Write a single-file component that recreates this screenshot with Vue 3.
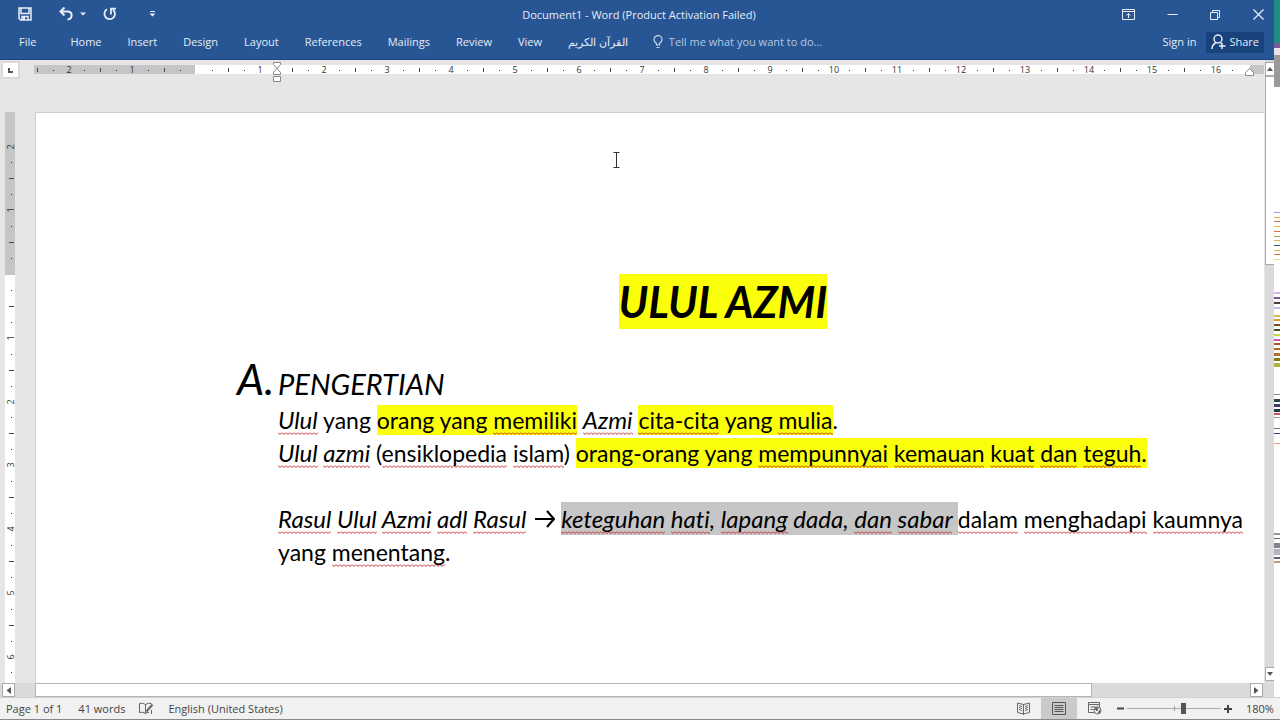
<script setup>
const tabs = ['Home', 'Insert', 'Design', 'Layout', 'References', 'Mailings', 'Review', 'View']

const UNIT = 63.75
function marks(from, to) {
  const list = []
  for (let q = from; q <= to; q++) {
    if (q === 0) continue
    const kind = q % 4 === 0 ? 'num' : q % 2 === 0 ? 'tick' : 'dot'
    list.push({ q, kind, pos: Math.round((q * UNIT) / 4), label: Math.abs(q / 4) })
  }
  return list
}
const across = marks(-10, 65)
const down = marks(-8, 25)

const noise = [
  [0, 43, '#1f8f86'], [43, 5, '#7d5a9a'], [48, 7, '#e8e4e8'], [55, 32, '#9a9a9a'],
  [212, 1, '#c08be0'], [217, 1, '#e5a94a'], [221, 1, '#c77a3a'], [226, 1, '#e8b84a'], [231, 1, '#c77a3a'],
  [236, 1, '#b09a4a'], [240, 1, '#d8b84a'], [245, 1, '#445566'], [250, 1, '#e8b84a'], [254, 1, '#c77a3a'], [259, 1, '#f1e36a'],
  [292, 2, '#d8b8e8'], [297, 2, '#7a5a8a'], [302, 2, '#553a4a'], [307, 2, '#c8b8ee'],
  [315, 2, '#d8b84a'], [319, 2, '#e0982a'], [324, 2, '#7a4a2a'], [329, 2, '#4a4a1a'], [334, 2, '#c9d84a'],
  [339, 2, '#cc55aa'], [343, 2, '#a8552a'], [348, 2, '#b0682a'], [353, 3, '#a8752a'], [358, 3, '#8a7a1a'], [363, 4, '#a8b83a'],
  [394, 1, '#888888'], [399, 3, '#2a4a4a'], [404, 3, '#443a6a'], [409, 3, '#223a3a'], [413, 2, '#cc5566'], [417, 1, '#999999'],
  [428, 1, '#777777'], [433, 1, '#334477'], [443, 1, '#ee9988'],
  [533, 2, '#999999'], [538, 1, '#666666'], [543, 5, '#88808c'], [549, 6, '#b8b0c0'], [557, 2, '#6a5a7a'], [561, 2, '#c09a7a']
]
</script>

<template>
  <div class="screen">
    <div class="window">
      <header class="chrome">
        <div class="titlebar">
          <div class="quick">
            <button class="tool save" aria-label="Save">
              <svg width="14" height="14" viewBox="0 0 14 14" fill="none" stroke="#e8eef7" stroke-width="1.5"><path d="M1 1h12v12H2.500L1 11.500zM3 1v5.500h8V1M4 13V9.500h6V13" /><path d="M5 10h2v3H5z" fill="#e8eef7" stroke="none" /></svg>
            </button>
            <button class="tool undo" aria-label="Undo">
              <svg width="14" height="14" viewBox="0 0 14 14" fill="none" stroke="#e8eef7" stroke-width="2"><path d="M5.500 0.500L1.500 4.500l4 4M2 4.500h6.500c5.500 0 5.500 7.500 0 8" /></svg>
            </button>
            <button class="tool caret" aria-label="Undo history">
              <svg width="6" height="4" viewBox="0 0 6 4"><path d="M0 0.500h6L3 3.500z" fill="#e8eef7" /></svg>
            </button>
            <button class="tool redo" aria-label="Repeat">
              <svg width="14" height="14" viewBox="0 0 14 14" fill="none" stroke="#e8eef7" stroke-width="1.800"><path d="M4 2.300A5.300 5.300 0 1 0 10 2.700M8 7.500V1.700h5" /></svg>
            </button>
            <button class="tool more" aria-label="Customize toolbar">
              <svg width="7" height="6" viewBox="0 0 7 6"><path d="M1 0h5v1H1zM0.500 2.500h6L3.500 5.500z" fill="#e8eef7" /></svg>
            </button>
          </div>
          <div class="title">Document1 - Word (Product Activation Failed)</div>
          <div class="controls">
            <button class="tool" aria-label="Ribbon display options">
              <svg width="13" height="11" viewBox="0 0 13 11" fill="none" stroke="#e8eef7"><path d="M0.500 0.500h12v10H0.500zM0.500 2.500h12M6.500 9V4.500M4.500 6.500l2-2 2 2" /></svg>
            </button>
            <button class="tool" aria-label="Minimize">
              <svg width="11" height="11" viewBox="0 0 11 11" fill="none" stroke="#e8eef7"><path d="M0.500 5.500h10" /></svg>
            </button>
            <button class="tool" aria-label="Restore">
              <svg width="11" height="11" viewBox="0 0 11 11" fill="none" stroke="#e8eef7"><path d="M0.500 3.500h7v7h-7zM2.500 3.500v-2h7v7h-2" /></svg>
            </button>
            <button class="tool" aria-label="Close">
              <svg width="11" height="11" viewBox="0 0 11 11" fill="none" stroke="#e8eef7" stroke-width="1.200"><path d="M0.500 0.500l10 10M10.500 0.500l-10 10" /></svg>
            </button>
          </div>
        </div>
        <nav class="tabs">
          <button class="file">File</button>
          <button v-for="t in tabs" :key="t">{{ t }}</button>
          <button lang="ar" dir="rtl">القرآن الكريم</button>
          <button class="tell">
            <svg width="10" height="14" viewBox="0 0 10 14" fill="none" stroke="#c9d8ee" stroke-width="1.200"><path d="M3.500 10V8.500C2.500 7.500 1 6.500 1 4.500a4 3.900 0 0 1 8 0c0 2-1.500 3-2.500 4V10zM3.500 12.500h3" /></svg>
            Tell me what you want to do...
          </button>
          <button class="signin">Sign in</button>
          <button class="share">
            <svg width="15" height="16" viewBox="0 0 15 16" fill="none" stroke="#e8eef7" stroke-width="1.500"><circle cx="7" cy="5" r="4" /><path d="M1 15c0-3.500 1.500-5 4-6.500M9 8.500l1.500 1M11 9v6M8 12h6.500" /></svg>
            Share
          </button>
        </nav>
      </header>

      <div class="body">
        <div class="canvas">
          <div class="top-ruler">
            <button class="tab-stop" aria-label="Tab stop"><svg width="5" height="5" viewBox="0 0 5 5"><path d="M1 0v4h4" fill="none" stroke="#555" stroke-width="2" /></svg></button>
            <svg class="ruler-h" height="24">
              <rect x="0" y="5" width="100%" height="9" fill="#fff" />
              <rect x="0" y="5" width="161" height="9" fill="#c5c5c5" />
              <svg x="100%" y="0" overflow="visible"><rect x="-14" y="5" width="14" height="9" fill="#c5c5c5" /></svg>
              <g v-for="m in across" :key="m.q">
                <text v-if="m.kind === 'num'" :x="162 + m.pos" y="13" class="num">{{ m.label }}</text>
                <rect v-else-if="m.kind === 'tick'" :x="162 + m.pos" y="8" width="1" height="4" fill="#444" />
                <rect v-else :x="162 + m.pos" y="10" width="1" height="1" fill="#333" />
              </g>
              <g fill="#fff" stroke="#888"><path d="M239.500 2.500h7v2l-3.500 4-3.500-4zM239.500 14.500v-2l3.500-4 3.500 4v2zM239.500 16.500h7v5h-7z" /></g>
              <svg x="100%" y="0" overflow="visible"><path d="M-18.500 15.500v-3l4-4 4 4v3z" fill="#fff" stroke="#888" /></svg>
            </svg>
          </div>

          <div class="sheet-row">
            <svg class="ruler-v" width="10">
              <rect width="10" height="100%" fill="#fff" />
              <rect width="10" height="163" fill="#c5c5c5" />
              <g v-for="m in down" :key="m.q">
                <text v-if="m.kind === 'num'" class="num" :transform="`translate(9 ${162 + m.pos}) rotate(-90)`">{{ m.label }}</text>
                <rect v-else-if="m.kind === 'tick'" x="4" :y="162 + m.pos" width="5" height="1" fill="#444" />
                <rect v-else x="6" :y="162 + m.pos" width="1" height="1" fill="#333" />
              </g>
            </svg>
            <main class="page">
              <svg class="ibeam" width="7" height="16" viewBox="0 0 7 16"><path d="M0.500 0.500h6M0.500 15.500h6M3.500 1v14" stroke="#333" fill="none" /></svg>
              <h1><mark>ULUL AZMI</mark></h1>
              <h2><span class="letter">A.</span><span>PENGERTIAN</span></h2>
              <p><i><u>Ulul</u></i> yang <mark>orang yang <u>memiliki</u></mark> <i><u>Azmi</u></i> <mark><u>cita-cita</u> yang <u>mulia</u></mark>.</p>
              <p><i><u>Ulul</u> <u>azmi</u></i> (<u>ensiklopedia</u> <u>islam</u>) <mark>orang-orang yang <u>mempunnyai</u> <u>kemauan</u> <u>kuat</u> <u>dan</u> <u>teguh</u>.</mark></p>
              <p class="gap"><i><u>Rasul</u> <u>Ulul</u> <u>Azmi</u> <u>adl</u> <u>Rasul</u></i> <svg class="arrow" width="20" height="18" viewBox="0 0 20 18" fill="none" stroke="#000" stroke-width="2.200" role="img" aria-label="arrow"><path d="M0 9h19M12 1l7 8-7 8" /></svg> <i class="selected"><u>keteguhan</u> <u>hati</u>, <u>lapang</u> dada, <u>dan</u> <u>sabar</u>&nbsp;</i><u>dalam</u> <u>menghadapi</u> <u>kaumnya</u><br>yang <u>menentang</u>.</p>
            </main>
          </div>

          <div class="hscroll">
            <button class="arrow-btn" aria-label="Scroll left"><svg width="5" height="7" viewBox="0 0 5 7"><path d="M5 0v7L0.500 3.500z" fill="#555" /></svg></button>
            <div class="htrack"><div class="hthumb"></div></div>
            <button class="arrow-btn" aria-label="Scroll right"><svg width="5" height="7" viewBox="0 0 5 7"><path d="M0 0v7l4.500-3.500z" fill="#555" /></svg></button>
          </div>
        </div>
        <div class="vscroll">
          <button aria-label="Scroll up"><svg width="6" height="4" viewBox="0 0 6 4"><path d="M0 4h6L3 0z" fill="#555" /></svg></button>
          <div class="vtrack"><div class="vthumb"></div></div>
          <button aria-label="Scroll down"><svg width="6" height="4" viewBox="0 0 6 4"><path d="M0 0h6L3 4z" fill="#555" /></svg></button>
        </div>
      </div>
    </div>

    <svg class="edge" width="6" aria-hidden="true">
      <rect width="6" height="100%" fill="#fff" />
      <rect v-for="(n, i) in noise" :key="i" :y="n[0]" width="6" :height="n[1]" :fill="n[2]" />
    </svg>

    <footer class="status">
      <span>Page 1 of 1</span>
      <span class="words">41 words</span>
      <button class="proof" aria-label="Proofing">
        <svg width="15" height="13" viewBox="0 0 15 13" fill="none" stroke="#666"><path d="M6.500 11.500V2.500Q4 0.500 0.500 1.500v9Q4 9.500 6.500 11.500 8 10 10 10.500M6.500 2.500Q9 0.500 12.500 1.500M12.500 8v4" /><path d="M7.500 9.500l6-7" stroke-width="2" /></svg>
      </button>
      <span>English (United States)</span>
      <div class="views">
        <button aria-label="Read mode"><svg width="13" height="13" viewBox="0 0 13 13" fill="none" stroke="#666"><path d="M6.500 2v11M6.500 2.500L0.500 1v9.500l6 1.500 6-1.500V1zM2 3.500l3 1M2 5.500l3 1M2 7.500l3 1M11 3.500l-3 1M11 5.500l-3 1M11 7.500l-3 1" /></svg></button>
        <button class="on" aria-label="Print layout"><svg width="14" height="13" viewBox="0 0 14 13" fill="none" stroke="#555"><path d="M0.500 0.500h13v12h-13zM2.500 3.500h9M2.500 5.500h9M2.500 7.500h9M2.500 9.500h9" /></svg></button>
        <button aria-label="Web layout"><svg width="14" height="13" viewBox="0 0 14 13" fill="none" stroke="#666"><path d="M6 10.500H0.500v-10h11V5M0.500 2.500h11M2.500 5h7M2.500 7.500h3" /><circle cx="9.500" cy="8.500" r="3.500" fill="#f1f1f1" /><path d="M7 7l3-1-1 3zM10 11l2-3v2z" fill="#666" /></svg></button>
      </div>
      <button class="zoom-btn" aria-label="Zoom out"><svg width="7" height="9" viewBox="0 0 7 9"><path d="M0 4.500h7" stroke="#444" stroke-width="2" /></svg></button>
      <input class="slider" type="range" min="0" max="100" value="61" aria-label="Zoom">
      <button class="zoom-btn" aria-label="Zoom in"><svg width="8" height="8" viewBox="0 0 8 8"><path d="M0 4h8M4 0v8" stroke="#444" stroke-width="2" /></svg></button>
      <span class="percent">180%</span>
    </footer>
  </div>
</template>

<style>
html, body, #app { height: 100%; }
body { margin: 0; }
</style>

<style scoped>
.screen {
  display: grid;
  grid-template: minmax(0, 1fr) 23px / minmax(0, 1fr) 6px;
  height: 100vh;
  overflow: hidden;
  background: #e6e6e6;
  font: 11px/16px "Open Sans", "Noto Sans", sans-serif;
}
button {
  display: flex;
  align-items: center;
  justify-content: center;
  padding: 0;
  border: 0;
  background: none;
  color: inherit;
  font: inherit;
  white-space: nowrap;
}
svg { display: block; flex: none; }
.window { display: flex; flex-direction: column; min-height: 0; }
.edge { height: 100%; }

.chrome { background: #285695; color: #e4ecf6; border-bottom: 1px solid #1c4580; }
.titlebar { display: grid; grid-template-columns: 1fr auto 1fr; align-items: center; height: 30px; }
.quick { display: flex; align-items: center; padding: 0 0 2px 18px; }
.undo { margin-left: 27px; }
.caret { margin-left: 7px; }
.redo { margin-left: 17px; }
.more { margin-left: 32px; }
.title { padding-left: 4px; }
.controls { display: flex; justify-content: flex-end; gap: 32px; padding: 0 10px 2px 0; }
.tabs { display: flex; align-items: center; gap: 26px; box-sizing: border-box; height: 29px; padding: 0 10px 5px 19px; }
.file { margin-right: 8px; }
.tell { gap: 6px; margin-left: -1px; color: #b3c7e4; }
.signin { margin-left: auto; }
.share { gap: 3px; height: 21px; padding: 0 5px; margin-left: -16px; background: #17427c; }

.body { display: flex; flex: 1; min-height: 0; }
.canvas { display: flex; flex-direction: column; flex: 1; min-width: 0; }
.top-ruler { display: flex; height: 52px; padding-right: 1px; }
.tab-stop { width: 15px; height: 14px; margin: 3px 16px 0 3px; background: #fff; outline: 2px solid #dadada; }
.ruler-h { flex: 1; min-width: 0; overflow: visible; }
.num { font: 9px "Open Sans", sans-serif; fill: #333; text-anchor: middle; }
.sheet-row { display: flex; flex: 1; min-height: 0; padding-left: 5px; }
.ruler-v { height: 100%; overflow: visible; }
.page {
  position: relative;
  flex: 1;
  min-width: 0;
  margin: 0 1px 0 20px;
  padding: 161px 14px 0 160px;
  border: 1px solid #cfcfcf;
  border-width: 1px 0 0 1px;
  background: #fff;
  color: #000;
  font-family: Lato, sans-serif;
  font-variant-ligatures: none;
  overflow: hidden;
}
.ibeam { position: absolute; left: 577px; top: 39px; }
mark { background: #fcff0a; color: inherit; }
h1 { margin: 0; font-size: 43px; font-style: italic; font-weight: 700; line-height: 55px; text-align: center; }
h1 mark { display: inline-block; }
h2 { display: flex; align-items: baseline; margin: 32px 0 2px 41px; font-size: 29px; font-style: italic; font-weight: 400; line-height: 36px; }
.letter { width: 41px; font-size: 43px; }
p { margin: 0 0 0 82px; font-size: 23px; line-height: 33px; white-space: nowrap; }
i { font-size: 24px; line-height: 24px; }
p mark { padding: 1px 0; }
.gap { margin-top: 33px; }
u {
  padding-bottom: 1px;
  text-decoration: none;
  background: url("data:image/svg+xml,%3Csvg xmlns='http://www.w3.org/2000/svg' width='4' height='3'%3E%3Cpath d='M0 .5L2 2.500L4 .5' fill='none' stroke='%23c82828'/%3E%3C/svg%3E") left bottom repeat-x;
}
.selected { padding: 2px 0; background: #c6c6c6; }
.arrow { display: inline-block; margin-left: 3px; }

.hscroll { display: flex; height: 14px; padding: 0 2px 0 2px; background: #dadada; }
.arrow-btn { width: 13px; box-sizing: border-box; border: 1px solid #aaa; background: #fff; }
.htrack { flex: 1; padding-left: 20px; }
.hthumb { box-sizing: border-box; width: 87%; height: 14px; border: 1px solid #b5b5b5; background: #fff; }
.vscroll { display: flex; flex-direction: column; width: 9px; padding: 2px 0 16px; background: #dadada; }
.vscroll button { height: 14px; box-sizing: border-box; border: 1px solid #aaa; border-right: 0; background: #fff; }
.vtrack { flex: 1; }
.vthumb { box-sizing: border-box; height: 32%; border: 1px solid #aaa; border-right: 0; background: #fff; }

.status {
  grid-column: 1 / -1;
  display: flex;
  align-items: center;
  box-sizing: border-box;
  padding: 0 9px 0 6px;
  border-top: 1px solid #d0d0d0;
  border-bottom: 1px solid #888;
  background: #f1f1f1;
  color: #444;
}
.words { margin-left: 16px; }
.proof { margin: 0 14px; }
.views { display: flex; align-self: stretch; margin-left: auto; }
.views button { width: 36px; }
.views .on { background: #cacaca; }
.zoom-btn { width: 8px; }
.views + .zoom-btn { margin-left: 3px; }
.slider { appearance: none; width: 94px; height: 12px; margin: 0 3px; background: linear-gradient(#aaa, #aaa) center / 100% 1px no-repeat, linear-gradient(#999, #999) 50% 50% / 1px 5px no-repeat; }
.slider::-webkit-slider-thumb { appearance: none; width: 5px; height: 11px; background: #555; }
.percent { width: 25px; margin-left: 14px; }
</style>
